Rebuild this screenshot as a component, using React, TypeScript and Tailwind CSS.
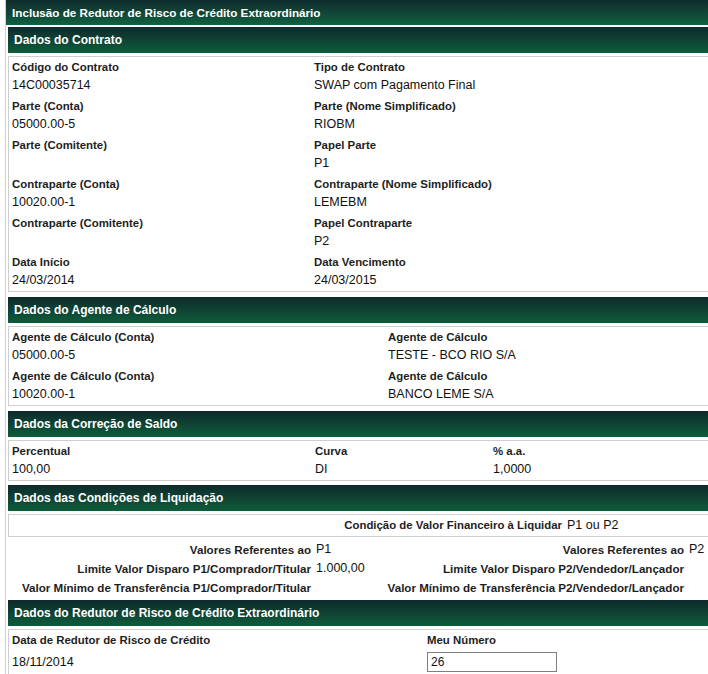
import React from 'react'

const font = { fontFamily: '"Liberation Sans", Arial, sans-serif' }

const SectionHeader = ({ title }: { title: string }) => (
  <div className="h-[26px] flex items-center pl-[6px] bg-gradient-to-b from-[#0e2a2b] to-[#0c5d3b] text-white text-[12px] font-bold">
    {title}
  </div>
)

const Label = ({ children }: { children?: React.ReactNode }) => (
  <div className="h-[19px] pt-[1px] leading-[19px] text-[11.4px] font-bold text-[#1e1e1e] whitespace-nowrap">{children}</div>
)

const Value = ({ children }: { children?: React.ReactNode }) => (
  <div className="h-[20px] leading-[19px] text-[12.5px] text-[#111] whitespace-nowrap">{children}</div>
)

const Field = ({ label, value }: { label: string; value?: string }) => (
  <div>
    <Label>{label}</Label>
    <Value>{value}</Value>
  </div>
)

export default function App() {
  const contrato: [string, string, string, string][] = [
    ['Código do Contrato', '14C00035714', 'Tipo de Contrato', 'SWAP com Pagamento Final'],
    ['Parte (Conta)', '05000.00-5', 'Parte (Nome Simplificado)', 'RIOBM'],
    ['Parte (Comitente)', '', 'Papel Parte', 'P1'],
    ['Contraparte (Conta)', '10020.00-1', 'Contraparte (Nome Simplificado)', 'LEMEBM'],
    ['Contraparte (Comitente)', '', 'Papel Contraparte', 'P2'],
    ['Data Início', '24/03/2014', 'Data Vencimento', '24/03/2015'],
  ]

  const agente: [string, string, string, string][] = [
    ['Agente de Cálculo (Conta)', '05000.00-5', 'Agente de Cálculo', 'TESTE - BCO RIO S/A'],
    ['Agente de Cálculo (Conta)', '10020.00-1', 'Agente de Cálculo', 'BANCO LEME S/A'],
  ]

  // linhas das condições de liquidação (esquerda / direita)
  const liquidacao = [
    { l: 'Valores Referentes ao', lv: 'P1', r: 'Valores Referentes ao', rv: 'P2' },
    { l: 'Limite Valor Disparo P1/Comprador/Titular', lv: '1.000,00', r: 'Limite Valor Disparo P2/Vendedor/Lançador', rv: '' },
    { l: 'Valor Mínimo de Transferência P1/Comprador/Titular', lv: '', r: 'Valor Mínimo de Transferência P2/Vendedor/Lançador', rv: '' },
  ]

  return (
    <div className="w-[708px] h-[674px] overflow-hidden bg-white" style={font}>
      <div className="w-[716px] ml-[5px] border-l border-[#d0d0d0] min-h-[674px]">
        {/* Título */}
        <div className="h-[25px] flex items-center pl-[6px] bg-gradient-to-b from-[#0f2b2c] to-[#0e6140] text-white text-[11.7px] font-bold">
          Inclusão de Redutor de Risco de Crédito Extraordinário
        </div>

        <div className="pl-[2px] pt-[2px]">
          {/* Dados do Contrato */}
          <SectionHeader title="Dados do Contrato" />
          <div className="mt-[3px] border border-[#cfcfcf] pl-[3px]">
            {contrato.map((row, i) => (
              <div key={i} className="grid grid-cols-[302px_1fr]">
                <Field label={row[0]} value={row[1]} />
                <Field label={row[2]} value={row[3]} />
              </div>
            ))}
          </div>

          {/* Dados do Agente de Cálculo */}
          <div className="mt-[5px]">
            <SectionHeader title="Dados do Agente de Cálculo" />
          </div>
          <div className="mt-[3px] border border-[#cfcfcf] pl-[3px]">
            {agente.map((row, i) => (
              <div key={i} className="grid grid-cols-[376px_1fr]">
                <Field label={row[0]} value={row[1]} />
                <Field label={row[2]} value={row[3]} />
              </div>
            ))}
          </div>

          {/* Dados da Correção de Saldo */}
          <div className="mt-[5px]">
            <SectionHeader title="Dados da Correção de Saldo" />
          </div>
          <div className="mt-[3px] border border-[#cfcfcf] pl-[3px] grid grid-cols-[303px_178px_1fr]">
            <Field label="Percentual" value="100,00" />
            <Field label="Curva" value="DI" />
            <Field label="% a.a." value="1,0000" />
          </div>

          {/* Dados das Condições de Liquidação */}
          <div className="mt-[4px]">
            <SectionHeader title="Dados das Condições de Liquidação" />
          </div>
          <div className="mt-[3px] border border-[#cfcfcf] h-[23px] flex items-center">
            <div className="w-[553px] text-right text-[11.4px] font-bold text-[#1e1e1e]">Condição de Valor Financeiro à Liquidar</div>
            <div className="pl-[5px] text-[12.5px] text-[#111]">P1 ou P2</div>
          </div>
          <div className="pt-[3px]">
            {liquidacao.map((row, i) => (
              <div key={i} className="h-[19px] flex items-center">
                <div className="w-[303px] text-right text-[11.6px] font-bold text-[#1e1e1e] whitespace-nowrap">{row.l}</div>
                <div className="w-[70px] pl-[5px] text-[12.5px] text-[#111]">{row.lv}</div>
                <div className="w-[303px] text-right text-[11.6px] font-bold text-[#1e1e1e] whitespace-nowrap">{row.r}</div>
                <div className="pl-[5px] text-[12.5px] text-[#111]">{row.rv}</div>
              </div>
            ))}
          </div>

          {/* Dados do Redutor de Risco de Crédito Extraordinário */}
          <div className="mt-[3px]">
            <SectionHeader title="Dados do Redutor de Risco de Crédito Extraordinário" />
          </div>
          <div className="mt-[3px] border border-[#cfcfcf] pl-[3px] grid grid-cols-[415px_1fr]">
            <div>
              <Label>Data de Redutor de Risco de Crédito</Label>
              <div className="h-[26px] leading-[26px] text-[12.5px] text-[#111]">18/11/2014</div>
            </div>
            <div>
              <Label>Meu Número</Label>
              <input
                defaultValue="26"
                className="mt-[2px] w-[130px] h-[20px] border border-[#7f7f7f] px-[3px] text-[12px] text-[#111] outline-none"
                style={font}
              />
            </div>
          </div>
        </div>
      </div>
    </div>
  )
}
